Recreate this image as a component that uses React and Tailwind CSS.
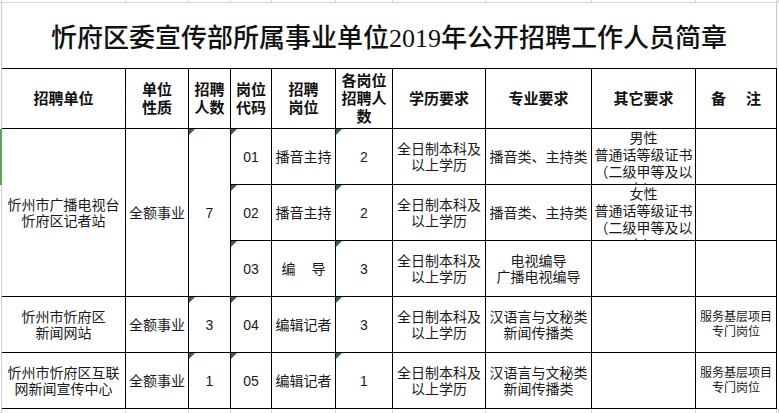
import React from "react";

const GRID_COLS = [
  "col-start-1",
  "col-start-2",
  "col-start-3",
  "col-start-4",
  "col-start-5",
  "col-start-6",
  "col-start-7",
  "col-start-8",
  "col-start-9",
  "col-start-10",
  "col-start-11",
  "col-start-12",
];

function Tri() {
  return (
    <span className="absolute left-0 top-0 h-0 w-0 border-t-[6px] border-r-[6px] border-t-[#2f6b2f] border-r-transparent" />
  );
}

function Cell({ className = "", tri = false, children }) {
  return (
    <div
      className={`relative flex flex-col items-center justify-center overflow-hidden border-r border-b border-black text-center ${className}`}
    >
      {tri && <Tri />}
      {children}
    </div>
  );
}

function Head({ className = "", children }) {
  return (
    <Cell className={`row-start-3 border-t text-[15px] leading-[18px] font-bold text-[#111] ${className}`}>
      {children}
    </Cell>
  );
}

function Lines({ items }) {
  return (
    <>
      {items.map((t, i) => (
        <span key={i} className="block whitespace-nowrap">
          {t}
        </span>
      ))}
    </>
  );
}

function Other({ row, first }) {
  return (
    <div
      className={`${row} col-start-10 flex flex-col items-center justify-start overflow-hidden border-r border-b border-black pt-[1px] text-center leading-[17px]`}
    >
      <Lines items={[first, "普通话等级证书", "（二级甲等及以", "上）"]} />
    </div>
  );
}

export default function App() {
  return (
    <div className="h-[413px] w-[779px] overflow-hidden bg-white font-['Liberation_Sans','Noto_Sans_CJK_SC',sans-serif] text-[14px] leading-[16px] text-[#1a1a1a]">
      <div className="grid h-full grid-cols-[2px_124px_63px_42px_41px_64px_57px_93px_106px_104px_81px_2px] grid-rows-[3px_65px_61px_56px_56px_56px_56px_56px_4px]">
        {/* top gridline strip */}
        {GRID_COLS.map((c, i) => (
          <div key={"t" + i} className={`row-start-1 ${c} border-r border-b border-[#d6d6d6]`} />
        ))}

        {/* left gutter */}
        <div className="col-start-1 row-start-2 row-span-2 border-r border-[#c8c8c8]" />
        <div className="col-start-1 row-start-4 bg-[#5fa55f]" />
        <div className="col-start-1 row-start-5 row-span-5 border-r border-[#cfcfcf]" />

        {/* title */}
        <div className="col-start-2 col-span-10 row-start-2 flex items-center justify-center border-r border-[#c8c8c8] pt-[6px] font-['Liberation_Serif','Noto_Sans_CJK_SC',serif] text-[26px] font-medium text-[#111]">
          忻府区委宣传部所属事业单位2019年公开招聘工作人员简章
        </div>

        {/* header */}
        <Head className="col-start-2">招聘单位</Head>
        <Head className="col-start-3">
          <Lines items={["单位", "性质"]} />
        </Head>
        <Head className="col-start-4">
          <Lines items={["招聘", "人数"]} />
        </Head>
        <Head className="col-start-5">
          <Lines items={["岗位", "代码"]} />
        </Head>
        <Head className="col-start-6">
          <Lines items={["招聘", "岗位"]} />
        </Head>
        <Head className="col-start-7 leading-[17px]">
          <Lines items={["各岗位", "招聘人", "数"]} />
        </Head>
        <Head className="col-start-8">学历要求</Head>
        <Head className="col-start-9">专业要求</Head>
        <Head className="col-start-10">其它要求</Head>
        <Head className="col-start-11">
          <div className="flex gap-[20px]">
            <span>备</span>
            <span>注</span>
          </div>
        </Head>

        {/* unit 1 merged */}
        <Cell className="col-start-2 row-start-4 row-span-3">
          <Lines items={["忻州市广播电视台", "忻府区记者站"]} />
        </Cell>
        <Cell className="col-start-3 row-start-4 row-span-3">全额事业</Cell>
        <Cell className="col-start-4 row-start-4 row-span-3" tri>
          7
        </Cell>

        {/* row 1 */}
        <Cell className="col-start-5 row-start-4" tri>01</Cell>
        <Cell className="col-start-6 row-start-4">播音主持</Cell>
        <Cell className="col-start-7 row-start-4" tri>2</Cell>
        <Cell className="col-start-8 row-start-4">
          <Lines items={["全日制本科及", "以上学历"]} />
        </Cell>
        <Cell className="col-start-9 row-start-4">播音类、主持类</Cell>
        <Other row="row-start-4" first="男性" />
        <Cell className="col-start-11 row-start-4" />

        {/* row 2 */}
        <Cell className="col-start-5 row-start-5" tri>02</Cell>
        <Cell className="col-start-6 row-start-5">播音主持</Cell>
        <Cell className="col-start-7 row-start-5" tri>2</Cell>
        <Cell className="col-start-8 row-start-5">
          <Lines items={["全日制本科及", "以上学历"]} />
        </Cell>
        <Cell className="col-start-9 row-start-5">播音类、主持类</Cell>
        <Other row="row-start-5" first="女性" />
        <Cell className="col-start-11 row-start-5" />

        {/* row 3 */}
        <Cell className="col-start-5 row-start-6" tri>03</Cell>
        <Cell className="col-start-6 row-start-6">
          <div className="flex gap-[16px]">
            <span>编</span>
            <span>导</span>
          </div>
        </Cell>
        <Cell className="col-start-7 row-start-6" tri>3</Cell>
        <Cell className="col-start-8 row-start-6">
          <Lines items={["全日制本科及", "以上学历"]} />
        </Cell>
        <Cell className="col-start-9 row-start-6">
          <Lines items={["电视编导", "广播电视编导"]} />
        </Cell>
        <Cell className="col-start-10 row-start-6" />
        <Cell className="col-start-11 row-start-6" />

        {/* row 4 */}
        <Cell className="col-start-2 row-start-7">
          <Lines items={["忻州市忻府区", "新闻网站"]} />
        </Cell>
        <Cell className="col-start-3 row-start-7">全额事业</Cell>
        <Cell className="col-start-4 row-start-7" tri>3</Cell>
        <Cell className="col-start-5 row-start-7" tri>04</Cell>
        <Cell className="col-start-6 row-start-7">编辑记者</Cell>
        <Cell className="col-start-7 row-start-7" tri>3</Cell>
        <Cell className="col-start-8 row-start-7">
          <Lines items={["全日制本科及", "以上学历"]} />
        </Cell>
        <Cell className="col-start-9 row-start-7">
          <Lines items={["汉语言与文秘类", "新闻传播类"]} />
        </Cell>
        <Cell className="col-start-10 row-start-7" />
        <Cell className="col-start-11 row-start-7 text-[12px] leading-[15px]">
          <Lines items={["服务基层项目", "专门岗位"]} />
        </Cell>

        {/* row 5 */}
        <Cell className="col-start-2 row-start-8">
          <Lines items={["忻州市忻府区互联", "网新闻宣传中心"]} />
        </Cell>
        <Cell className="col-start-3 row-start-8">全额事业</Cell>
        <Cell className="col-start-4 row-start-8" tri>1</Cell>
        <Cell className="col-start-5 row-start-8" tri>05</Cell>
        <Cell className="col-start-6 row-start-8">编辑记者</Cell>
        <Cell className="col-start-7 row-start-8" tri>1</Cell>
        <Cell className="col-start-8 row-start-8">
          <Lines items={["全日制本科及", "以上学历"]} />
        </Cell>
        <Cell className="col-start-9 row-start-8">
          <Lines items={["汉语言与文秘类", "新闻传播类"]} />
        </Cell>
        <Cell className="col-start-10 row-start-8" />
        <Cell className="col-start-11 row-start-8 text-[12px] leading-[15px]">
          <Lines items={["服务基层项目", "专门岗位"]} />
        </Cell>

        {/* bottom gridline strip */}
        {GRID_COLS.slice(1).map((c, i) => (
          <div key={"b" + i} className={`row-start-9 ${c} border-r border-[#d6d6d6]`} />
        ))}
      </div>
    </div>
  );
}
